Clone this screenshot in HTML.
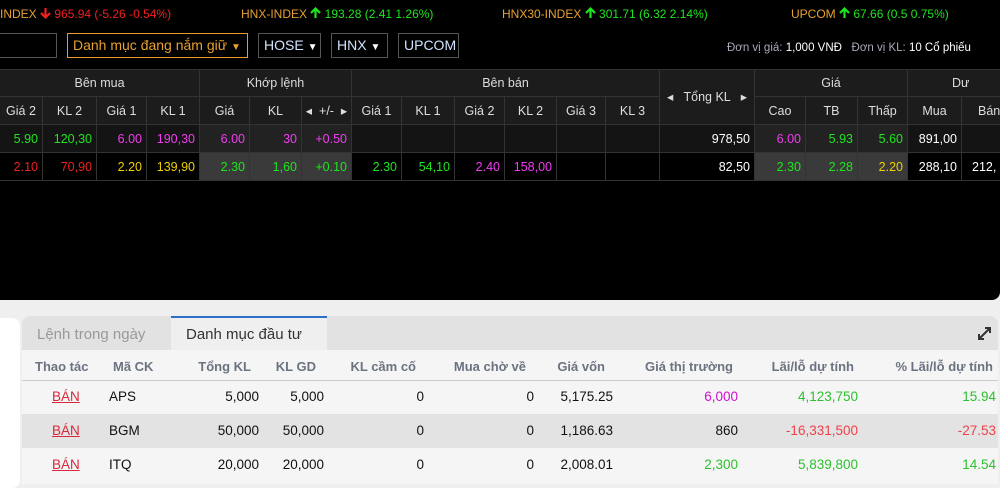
<html><head><style>
body{margin:0;width:1000px;height:484px;overflow:hidden;background:#efefef;font-family:"Liberation Sans","DejaVu Sans",sans-serif;position:relative}
.a{position:absolute;white-space:nowrap}
#top{position:absolute;left:0;top:0;width:1000px;height:300px;background:#000;border-bottom-right-radius:8px}
.c{position:absolute;box-sizing:border-box;border-right:1px solid #333;border-bottom:1px solid #333;font-size:12.5px;color:#ddd;display:flex;align-items:center;justify-content:center;white-space:nowrap;overflow:hidden}
.r{justify-content:flex-end;padding-right:4px}
.btn{position:absolute;top:33px;height:25px;box-sizing:border-box;border:1px solid #555;color:#cfe4ff;font-size:14px;padding:3px 5px;white-space:nowrap}
.g{color:#1ee61e}.rd{color:#f21f1f}.p{color:#f23cf2}.y{color:#f0d000}.w{color:#fff}
.bh{position:absolute;top:359px;font-size:13px;font-weight:bold;color:#6b7280}
.bc{position:absolute;font-size:13.5px;color:#111}
svg.ar{vertical-align:-1px}
</style></head><body>
<div id="top">
<div class="a" style="left:0;top:7px;font-size:12px;color:#e8a030">INDEX <span class="rd"><svg class="ar" width="11" height="12" viewBox="0 0 11 12"><path d="M5.5 1v9M1 6l4.5 4.5L10 6" stroke="#f21f1f" stroke-width="2.2" fill="none"/></svg> 965.94 (-5.26 -0.54%)</span></div>
<div class="a" style="left:241px;top:7px;font-size:12px;color:#e8a030">HNX-INDEX <span class="g"><svg class="ar" width="11" height="12" viewBox="0 0 11 12"><path d="M5.5 11V2M1 6l4.5-4.5L10 6" stroke="#1ee61e" stroke-width="2.2" fill="none"/></svg> 193.28 (2.41 1.26%)</span></div>
<div class="a" style="left:502px;top:7px;font-size:12px;color:#e8a030">HNX30-INDEX <span class="g"><svg class="ar" width="11" height="12" viewBox="0 0 11 12"><path d="M5.5 11V2M1 6l4.5-4.5L10 6" stroke="#1ee61e" stroke-width="2.2" fill="none"/></svg> 301.71 (6.32 2.14%)</span></div>
<div class="a" style="left:791px;top:7px;font-size:12px;color:#e8a030">UPCOM <span class="g"><svg class="ar" width="11" height="12" viewBox="0 0 11 12"><path d="M5.5 11V2M1 6l4.5-4.5L10 6" stroke="#1ee61e" stroke-width="2.2" fill="none"/></svg> 67.66 (0.5 0.75%)</span></div>
<div class="btn" style="left:-2px;width:59px"></div>
<div class="btn" style="left:67px;width:181px;border-color:#e89a30;color:#e8a030">Danh mục đang nắm giữ <span style="font-size:10px">▼</span></div>
<div class="btn" style="left:258px;width:63px">HOSE <span style="font-size:10px;color:#fff">▼</span></div>
<div class="btn" style="left:331px;width:57px">HNX <span style="font-size:10px;color:#fff">▼</span></div>
<div class="btn" style="left:398px;width:61px">UPCOM</div>
<div class="a" style="left:727px;top:42px;font-size:11.5px;color:#aab">Đơn vị giá: <span class="w">1,000 VNĐ</span> &nbsp; Đơn vị KL: <span class="w">10 Cổ phiếu</span></div>
<div style="position:absolute;left:0;top:69px;width:1000px;height:56px;background:#1c1c1c;border-top:1px solid #333"></div>
<div style="position:absolute;left:0;top:125px;width:1000px;height:28px;background:#141414"></div>
<div class="c" style="left:0;top:69px;width:200px;height:28px">Bên mua</div>
<div class="c" style="left:200px;top:69px;width:152px;height:28px">Khớp lệnh</div>
<div class="c" style="left:352px;top:69px;width:308px;height:28px">Bên bán</div>
<div class="c" style="left:660px;top:69px;width:95px;height:56px">◂ &nbsp; Tổng KL &nbsp; ▸</div>
<div class="c" style="left:755px;top:69px;width:153px;height:28px">Giá</div>
<div class="c" style="left:908px;top:69px;width:110px;height:28px;justify-content:flex-start;padding-left:44px">Dư</div>
<div id="rows"></div>
</div>
<div style="position:absolute;left:-10px;top:318px;width:30px;height:170px;background:#fff;border-radius:8px"></div>
<div style="position:absolute;left:22px;top:316px;width:976px;height:168px;background:#e2e2e2;border-radius:8px 8px 0 0"></div>
<div style="position:absolute;left:22px;top:350px;width:976px;height:134px;background:#f5f5f5"></div>
<div style="position:absolute;left:22px;top:380px;width:976px;height:1px;background:#ccc"></div>
<div style="position:absolute;left:22px;top:414px;width:976px;height:34px;background:#e3e3e3"></div>
<div class="a" style="left:37px;top:326px;font-size:15px;color:#999">Lệnh trong ngày</div>
<div style="position:absolute;left:171px;top:316px;width:156px;height:34px;background:#efefef;border-top:2px solid #2f6fc8;box-sizing:border-box"></div>
<div class="a" style="left:186px;top:326px;font-size:15px;color:#333">Danh mục đầu tư</div>
<svg style="position:absolute;left:977px;top:326px" width="15" height="15" viewBox="0 0 15 15"><path d="M2 13L13 2M8 2h5v5M2 8v5h5" stroke="#333" stroke-width="2" fill="none"/></svg>
<div id="bot"></div>
<script>
var cols=[0,43,97,147,200,250,302,352,402,455,505,557,606,660,755,806,858,908,962,1040];
var h2=["Giá 2","KL 2","Giá 1","KL 1","Giá","KL","◂ &nbsp;+/- &nbsp;▸","Giá 1","KL 1","Giá 2","KL 2","Giá 3","KL 3",null,"Cao","TB","Thấp","Mua","Bán"];
var r1=[["g","5.90"],["g","120,30"],["p","6.00"],["p","190,30"],["p","6.00"],["p","30"],["p","+0.50"],0,0,0,0,0,0,["w","978,50"],["p","6.00"],["g","5.93"],["g","5.60"],["w","891,00"],0];
var r2=[["rd","2.10"],["rd","70,90"],["y","2.20"],["y","139,90"],["g","2.30"],["g","1,60"],["g","+0.10"],["g","2.30"],["g","54,10"],["p","2.40"],["p","158,00"],0,0,["w","82,50"],["g","2.30"],["g","2.28"],["y","2.20"],["w","288,10"],["w","212,"]];
var s="";
for(var i=0;i<19;i++){var l=cols[i],w=cols[i+1]-l;
var last=i==18?"justify-content:flex-start;padding-left:16px;":"";
if(h2[i])s+='<div class="c" style="'+last+'left:'+l+'px;top:97px;width:'+w+'px;height:28px">'+h2[i]+'</div>';
var bg1=(i>=4&&i<=6)||(i>=14&&i<=16)?"background:#222;":"";
var bg2=(i>=4&&i<=6)||(i>=14&&i<=16)?"background:#3a3a3a;":"";
var lastv=i==18?"justify-content:flex-start;padding-left:10px;":"";
var a=r1[i],b=r2[i];
s+='<div class="c r '+(a?a[0]:"")+'" style="'+bg1+lastv+'left:'+l+'px;top:125px;width:'+w+'px;height:28px">'+(a?a[1]:"")+'</div>';
s+='<div class="c r '+(b?b[0]:"")+'" style="'+bg2+lastv+'left:'+l+'px;top:153px;width:'+w+'px;height:28px">'+(b?b[1]:"")+'</div>';}
document.getElementById("rows").innerHTML=s;
var t="";
var hd=[["Thao tác",35,"l"],["Mã CK",113,"l"],["Tổng KL",251,"r"],["KL GD",316,"r"],["KL cầm cố",416,"r"],["Mua chờ về",526,"r"],["Giá vốn",605,"r"],["Giá thị trường",733,"r"],["Lãi/lỗ dự tính",854,"r"],["% Lãi/lỗ dự tính",993,"r"]];
hd.forEach(function(h){t+='<div class="bh" style="'+(h[2]=="l"?"left:"+h[1]:"right:"+(1000-h[1]))+'px">'+h[0]+'</div>'});
var rows=[["APS","5,000","5,000","5,175.25",["#d010d0","6,000"],["#2ec02e","4,123,750"],["#2ec02e","15.94"]],
["BGM","50,000","50,000","1,186.63",["#111","860"],["#f0404a","-16,331,500"],["#f0404a","-27.53"]],
["ITQ","20,000","20,000","2,008.01",["#2ec02e","2,300"],["#2ec02e","5,839,800"],["#2ec02e","14.54"]]];
rows.forEach(function(r,k){var y=389+k*34;
t+='<div class="bc" style="left:52px;top:'+y+'px;color:#d8283a;text-decoration:underline">BÁN</div>';
t+='<div class="bc" style="left:109px;top:'+y+'px">'+r[0]+'</div>';
t+='<div class="bc" style="right:741px;top:'+y+'px">'+r[1]+'</div>';
t+='<div class="bc" style="right:676px;top:'+y+'px">'+r[2]+'</div>';
t+='<div class="bc" style="right:576px;top:'+y+'px">0</div>';
t+='<div class="bc" style="right:466px;top:'+y+'px">0</div>';
t+='<div class="bc" style="right:387px;top:'+y+'px">'+r[3]+'</div>';
t+='<div class="bc" style="right:262px;top:'+y+'px;color:'+r[4][0]+'">'+r[4][1]+'</div>';
t+='<div class="bc" style="right:142px;top:'+y+'px;color:'+r[5][0]+'">'+r[5][1]+'</div>';
t+='<div class="bc" style="right:4px;top:'+y+'px;color:'+r[6][0]+'">'+r[6][1]+'</div>';});
document.getElementById("bot").innerHTML=t;
</script>
</body></html>
